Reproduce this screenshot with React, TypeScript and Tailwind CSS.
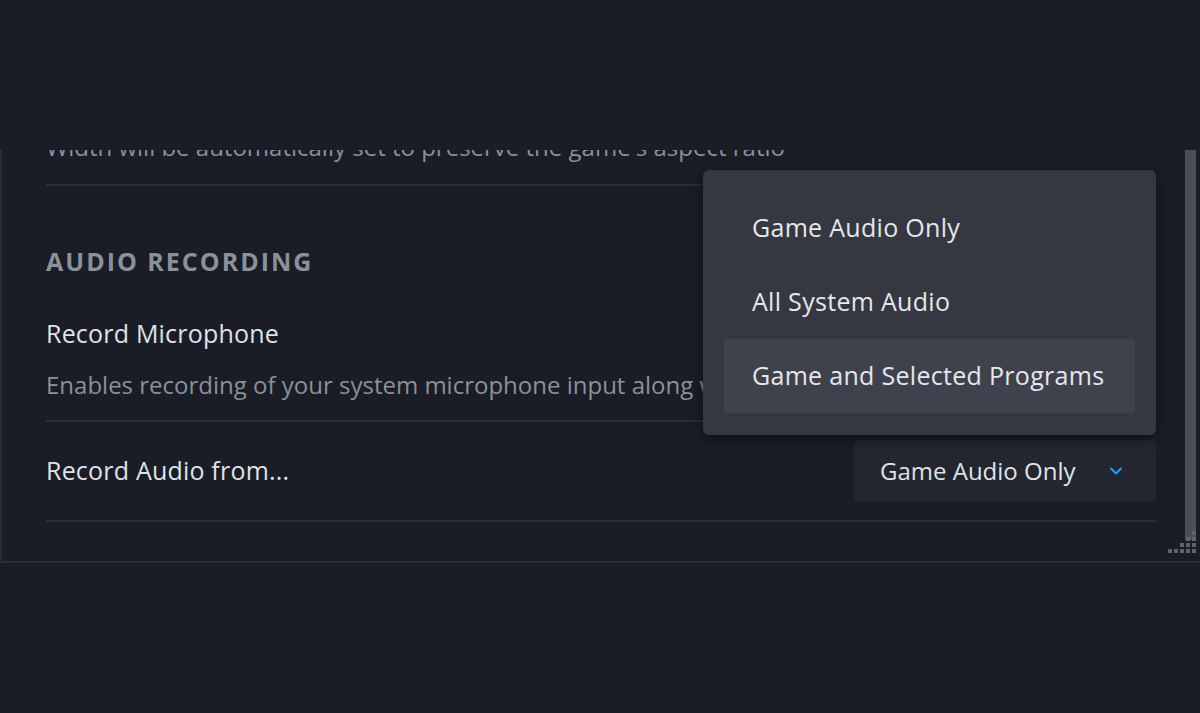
import { ChevronDown } from 'lucide-react'

const font = { fontFamily: '"Open Sans", Lato, "Liberation Sans", sans-serif' }

function Separator() {
  return <div className="h-[2px] bg-[#2b2f38]" />
}

function ResizeGrip() {
  const dots = [
    [24, 0], [24, 6], [18, 6], [24, 12], [18, 12], [12, 12], [24, 18], [18, 18], [12, 18], [6, 18], [0, 18],
  ]
  return (
    <svg width="28" height="22" viewBox="0 0 28 22" className="absolute right-[4px] bottom-[8px]">
      {dots.map(([x, y], i) => (
        <rect key={i} x={x} y={y} width="4" height="4" fill="#5d626c" />
      ))}
    </svg>
  )
}

export default function App() {
  const options = ['Game Audio Only', 'All System Audio', 'Game and Selected Programs']

  return (
    <div className="w-[1200px] h-[713px] bg-[#1a1d26] overflow-hidden flex flex-col" style={font}>
      <div className="h-[150px] shrink-0" />

      {/* settings panel */}
      <div className="relative h-[413px] shrink-0 border-l-2 border-b-2 border-[#2a2d36] overflow-hidden">
        <div className="pl-[44px] pr-[44px] -mt-[18px]">
          <div className="text-[24px] text-[#8b9099] leading-[30px] whitespace-nowrap">
            Width will be automatically set to preserve the game's aspect ratio
          </div>
          <div className="mt-[22px]">
            <Separator />
          </div>

          <div className="pt-[60px] text-[25px] font-bold tracking-[2px] text-[#8b919b] leading-[30px]">
            AUDIO RECORDING
          </div>

          <div className="pt-[42px] text-[25px] text-[#dfe3e8] leading-[30px] tracking-[0.2px]">Record Microphone</div>
          <div className="pt-[22px] text-[24px] text-[#8b9099] leading-[30px] whitespace-nowrap">
            Enables recording of your system microphone input along with game audio
          </div>
          <div className="mt-[20px]">
            <Separator />
          </div>

          <div className="flex items-center justify-between h-[97px]">
            <div className="text-[25px] text-[#dfe3e8] tracking-[0.2px]">Record Audio from...</div>
            <button className="w-[302px] h-[62px] bg-[#23262f] rounded-[5px] flex items-center justify-between pl-[26px] pr-[30px]">
              <span className="text-[24px] text-[#dfe3e8]">Game Audio Only</span>
              <ChevronDown className="w-[20px] h-[20px] text-[#1a9fff]" strokeWidth={2.5} />
            </button>
          </div>
          <div className="mt-[1px]">
            <Separator />
          </div>
        </div>

        {/* scrollbar */}
        <div className="absolute right-[4px] top-0 w-[11px] h-[390px] bg-[#4a4e58]" />
        <ResizeGrip />
        <div className="absolute left-[546px] bottom-[-2px] w-[30px] h-[2px] bg-[#454953]" />
      </div>

      <div className="flex-1" />

      {/* dropdown menu */}
      <div className="absolute left-[703px] top-[170px] w-[453px] h-[265px] bg-[#353840] rounded-[6px] shadow-[0_4px_14px_rgba(0,0,0,0.45)] px-[21px] pt-[21px]">
        {options.map((o, i) => (
          <div
            key={o}
            className={`h-[74px] flex items-center pl-[28px] rounded-[3px] text-[25px] tracking-[0.3px] text-[#e4e7eb] ${i === 2 ? 'bg-[#3f424c]' : ''}`}
          >
            {o}
          </div>
        ))}
      </div>
    </div>
  )
}
